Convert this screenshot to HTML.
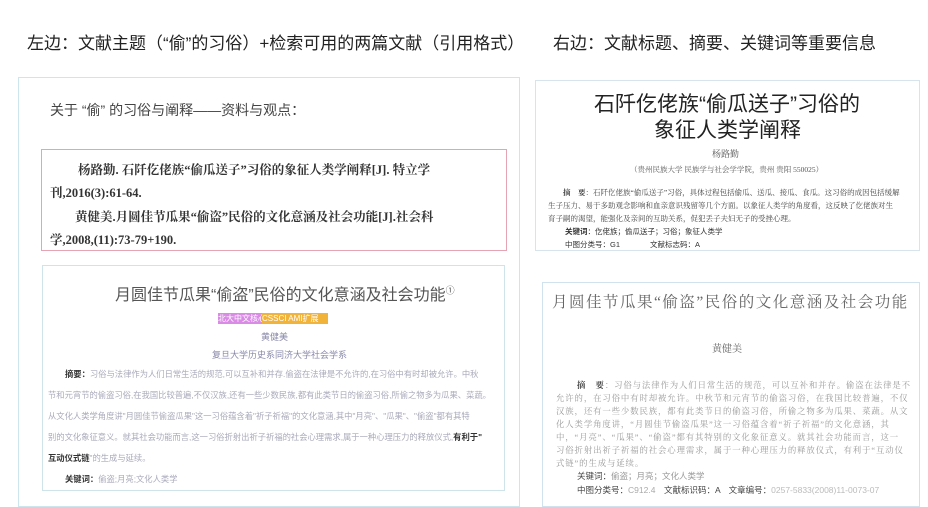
<!DOCTYPE html>
<html><head><meta charset="utf-8"><style>
*{margin:0;padding:0;box-sizing:border-box}
body{width:928px;height:500px;background:#fff;position:relative;overflow:hidden;font-family:"Liberation Sans","Noto Sans CJK SC",sans-serif;color:#333}
.a{position:absolute;white-space:nowrap}
.serif{font-family:"Liberation Serif","Noto Serif CJK SC",serif}
.box{position:absolute;border:1px solid #cfe3ea}
.g{color:#aab;font-size:8.3px}
.r{font-size:8.4px;color:#999;letter-spacing:0.9px}
</style></head><body>
<div class="a" style="left:27px;top:29px;font-size:17px;color:#222">左边：文献主题（“偷”的习俗）+检索可用的两篇文献（引用格式）</div>
<div class="a" style="left:553px;top:29px;font-size:17px;color:#222">右边：文献标题、摘要、关键词等重要信息</div>

<div class="box" style="left:18px;top:77px;width:502px;height:430px;border-color:#cde6ee"></div>
<div class="a" style="left:50px;top:100px;font-size:14px;color:#444">关于 “偷” 的习俗与阐释——资料与观点：</div>
<div class="box" style="left:41px;top:149px;width:466px;height:102px;border-color:#e5a3b3"></div>
<div class="a serif" style="left:78px;top:160px;font-size:12.5px;font-weight:bold;color:#333">杨路勤. 石阡仡佬族“偷瓜送子”习俗的象征人类学阐释[J]. 特立学</div>
<div class="a serif" style="left:50px;top:183px;font-size:12.5px;font-weight:bold;color:#333">刊,2016(3):61-64.</div>
<div class="a serif" style="left:75px;top:207px;font-size:12.5px;font-weight:bold;color:#333">黄健美.月圆佳节瓜果“偷盗”民俗的文化意涵及社会功能[J].社会科</div>
<div class="a serif" style="left:50px;top:230px;font-size:12.5px;font-weight:bold;color:#333">学,2008,(11):73-79+190.</div>

<div class="box" style="left:42px;top:265px;width:463px;height:226px"></div>
<div class="a" style="left:115px;top:281px;font-size:16px;color:#555">月圆佳节瓜果“偷盗”民俗的文化意涵及社会功能<sup style="font-size:9px">①</sup></div>
<div class="a" style="left:218px;top:313px;height:11px;width:44px;background:#d98be6;font-size:8px;color:#fff;line-height:11px;overflow:hidden">北大中文核心</div>
<div class="a" style="left:262px;top:313px;height:11px;width:66px;background:#f2b33a;font-size:8px;color:#fff;line-height:11px;overflow:hidden">CSSCI AMI扩展</div>
<div class="a" style="left:261px;top:330px;font-size:9px;color:#88a">黄健美</div>
<div class="a" style="left:212px;top:348px;font-size:9px;color:#88a">复旦大学历史系同济大学社会学系</div>
<div class="a g" style="left:65px;top:368px"><b style="color:#333">摘要：</b>习俗与法律作为人们日常生活的规范,可以互补和并存.偷盗在法律是不允许的,在习俗中有时却被允许。中秋</div>
<div class="a g" style="left:48px;top:389px">节和元宵节的偷盗习俗,在我国比较普遍,不仅汉族,还有一些少数民族,都有此类节日的偷盗习俗,所偷之物多为瓜果、菜蔬。</div>
<div class="a g" style="left:48px;top:410px">从文化人类学角度讲"月圆佳节偷盗瓜果"这一习俗蕴含着"祈子祈福"的文化意涵,其中"月亮"、"瓜果"、"偷盗"都有其特</div>
<div class="a g" style="left:48px;top:431px">别的文化象征意义。就其社会功能而言,这一习俗折射出祈子祈福的社会心理需求,属于一种心理压力的释放仪式,<b style="color:#333">有利于"</b></div>
<div class="a g" style="left:48px;top:452px"><b style="color:#333">互动仪式链</b>"的生成与延续。</div>
<div class="a g" style="left:65px;top:473px"><b style="color:#333">关键词：</b>偷盗;月亮;文化人类学</div>

<div class="box" style="left:535px;top:80px;width:385px;height:171px;border-color:#d8e4ec"></div>
<div class="a" style="left:594px;top:88px;font-size:21px;color:#222">石阡仡佬族“偷瓜送子”习俗的</div>
<div class="a" style="left:654px;top:114px;font-size:21px;color:#222">象征人类学阐释</div>
<div class="a serif" style="left:712px;top:147px;font-size:9px;color:#555">杨路勤</div>
<div class="a serif" style="left:630px;top:164px;font-size:7.5px;color:#555">（贵州民族大学 民族学与社会学学院，贵州 贵阳 550025）</div>
<div class="a serif" style="left:563px;top:187px;font-size:7.5px;color:#444"><b>摘　要</b>：石阡仡佬族“偷瓜送子”习俗，具体过程包括偷瓜、送瓜、接瓜、食瓜。这习俗的成因包括缓解</div>
<div class="a serif" style="left:548px;top:200px;font-size:7.5px;color:#444">生子压力、易于多助观念影响和血亲意识残留等几个方面。以象征人类学的角度看，这反映了仡佬族对生</div>
<div class="a serif" style="left:548px;top:213px;font-size:7.5px;color:#444">育子嗣的渴望，能强化及亲间的互助关系，促犯丢子夫妇无子的受挫心理。</div>
<div class="a" style="left:565px;top:226px;font-size:7.5px;color:#333"><b>关键词</b>：仡佬族；偷瓜送子；习俗；象征人类学</div>
<div class="a" style="left:565px;top:239px;font-size:7.5px;color:#333">中图分类号：G1　　　　文献标志码：A</div>

<div class="box" style="left:542px;top:282px;width:378px;height:225px;border-color:#d0e2ee"></div>
<div class="a serif" style="left:552px;top:290px;font-size:15.5px;color:#666;letter-spacing:1.5px">月圆佳节瓜果“偷盗”民俗的文化意涵及社会功能</div>
<div class="a serif" style="left:712px;top:340px;font-size:10px;color:#666">黄健美</div>
<div class="a serif r" style="left:577px;top:379px"><b style="color:#444">摘　要</b>：习俗与法律作为人们日常生活的规范，可以互补和并存。偷盗在法律是不</div>
<div class="a serif r" style="left:556px;top:392px">允许的，在习俗中有时却被允许。中秋节和元宵节的偷盗习俗，在我国比较普遍，不仅</div>
<div class="a serif r" style="left:556px;top:405px">汉族，还有一些少数民族，都有此类节日的偷盗习俗，所偷之物多为瓜果、菜蔬。从文</div>
<div class="a serif r" style="left:556px;top:418px">化人类学角度讲，“月圆佳节偷盗瓜果”这一习俗蕴含着“祈子祈福”的文化意涵，其</div>
<div class="a serif r" style="left:556px;top:431px">中，“月亮”、“瓜果”、“偷盗”都有其特别的文化象征意义。就其社会功能而言，这一</div>
<div class="a serif r" style="left:556px;top:444px">习俗折射出祈子祈福的社会心理需求，属于一种心理压力的释放仪式，有利于“互动仪</div>
<div class="a serif r" style="left:556px;top:457px">式链”的生成与延续。</div>
<div class="a" style="left:577px;top:470px;font-size:8.5px;color:#444">关键词：<span style="color:#999">偷盗；月亮；文化人类学</span></div>
<div class="a" style="left:577px;top:484px;font-size:8.5px;color:#444">中图分类号：<span style="color:#aaa">C912.4</span>　文献标识码：A　文章编号：<span style="color:#bbb">0257-5833(2008)11-0073-07</span></div>
</body></html>
